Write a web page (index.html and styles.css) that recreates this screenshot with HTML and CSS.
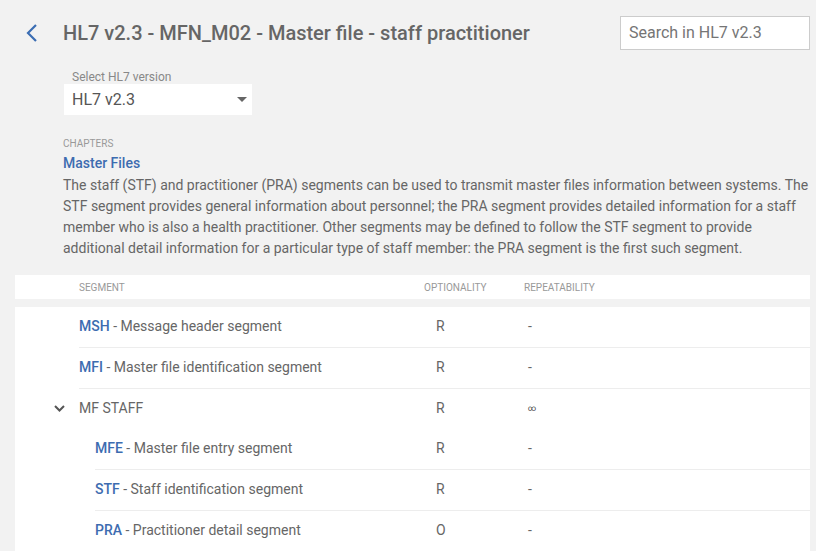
FILE: index.html
```html
<!DOCTYPE html>
<html>
<head>
<meta charset="utf-8">
<link rel="stylesheet" href="styles.css">
</head>
<body>
<header class="topbar">
  <a class="back" href="#"><svg width="14" height="20" viewBox="0 0 14 20"><path d="M11 2 L3 10 L11 18" fill="none" stroke="#3b6db3" stroke-width="2.2"/></svg></a>
  <h1 class="title">HL7 v2.3 - MFN_M02 - Master file - staff practitioner</h1>
  <div class="search">Search in HL7 v2.3</div>
</header>

<section class="version">
  <div class="version-label">Select HL7 version</div>
  <div class="select"><span>HL7 v2.3</span><svg width="10" height="5" viewBox="0 0 10 5"><path d="M0 0 H10 L5 5 Z" fill="#666"/></svg></div>
</section>

<section class="chapter">
  <div class="chapter-label">CHAPTERS</div>
  <div class="chapter-name">Master Files</div>
  <p class="chapter-desc">The staff (STF) and practitioner (PRA) segments can be used to transmit master files information between systems. The STF segment provides general information about personnel; the PRA segment provides detailed information for a staff member who is also a health practitioner. Other segments may be defined to follow the STF segment to provide additional detail information for a particular type of staff member: the PRA segment is the first such segment.</p>
</section>

<div class="thead">
  <div class="row head">
    <div>SEGMENT</div>
    <div>OPTIONALITY</div>
    <div>REPEATABILITY</div>
  </div>
</div>

<div class="tbody">
  <div class="row line">
    <div class="name"><b>MSH</b> - Message header segment</div>
    <div class="opt">R</div>
    <div class="rep">-</div>
  </div>
  <div class="row line">
    <div class="name"><b>MFI</b> - Master file identification segment</div>
    <div class="opt">R</div>
    <div class="rep">-</div>
  </div>
  <div class="row">
    <div class="name group"><svg class="toggle" width="11" height="7" viewBox="0 0 11 7"><path d="M1 1 L5.5 5.5 L10 1" fill="none" stroke="#555" stroke-width="2"/></svg>MF STAFF</div>
    <div class="opt">R</div>
    <div class="rep inf">∞</div>
  </div>
  <div class="row nested line">
    <div class="name"><b>MFE</b> - Master file entry segment</div>
    <div class="opt">R</div>
    <div class="rep">-</div>
  </div>
  <div class="row nested line">
    <div class="name"><b>STF</b> - Staff identification segment</div>
    <div class="opt">R</div>
    <div class="rep">-</div>
  </div>
  <div class="row nested">
    <div class="name"><b>PRA</b> - Practitioner detail segment</div>
    <div class="opt">O</div>
    <div class="rep">-</div>
  </div>
</div>
</body>
</html>
```

FILE: styles.css
```css
html, body {
  margin: 0;
  padding: 0;
  background: #f2f2f2;
  font-family: Roboto, "Liberation Sans", sans-serif;
  color: #666;
  overflow: hidden;
}

.topbar {
  display: flex;
  align-items: center;
  padding: 16px 6px 0 25px;
  height: 33px;
}

.back {
  display: flex;
  width: 14px;
  height: 20px;
  margin-right: 24px;
}

.title {
  flex: 1;
  margin: 0;
  font-size: 20px;
  font-weight: 500;
  color: #666;
  white-space: nowrap;
}

.search {
  box-sizing: border-box;
  width: 190px;
  height: 34px;
  background: #fff;
  border: 1px solid #ccc;
  padding: 0 8px;
  line-height: 32px;
  font-size: 16px;
  color: #757575;
}

.version {
  margin: 21px 0 0 64px;
}

.version-label {
  font-size: 12px;
  line-height: 14px;
  color: #888;
  padding-left: 8px;
}

.select {
  box-sizing: border-box;
  width: 188px;
  height: 31px;
  background: #fff;
  display: flex;
  align-items: center;
  justify-content: space-between;
  padding: 0 5px 0 8px;
  font-size: 16px;
  color: #555;
}

.chapter {
  margin: 23px 6px 0 63px;
}

.chapter-label {
  font-size: 10px;
  line-height: 12px;
  color: #999;
}

.chapter-name {
  font-size: 14px;
  font-weight: 500;
  line-height: 20px;
  margin-top: 3px;
  color: #3d6cb0;
}

.chapter-desc {
  margin: 2px 0 0;
  font-size: 14px;
  line-height: 21px;
  color: #666;
}

.thead {
  margin: 16px 6px 0 15px;
  background: #fff;
}

.tbody {
  margin: 8px 6px 0 15px;
  background: #fff;
}

.row {
  display: grid;
  grid-template-columns: 345px 100px 1fr;
  margin-left: 64px;
  height: 40px;
  align-items: center;
  font-size: 14px;
}

.tbody .row > div {
  margin-bottom: 2px;
}

.row.head {
  height: 24px;
  font-size: 10px;
  color: #999;
}

.row.nested {
  margin-left: 80px;
  grid-template-columns: 329px 100px 1fr;
}

.row.line {
  border-bottom: 1px solid #ededed;
}

.name b {
  font-weight: 500;
  color: #3d6cb0;
}

.name.group {
  display: flex;
  align-items: center;
  margin-left: -25px;
}

.toggle {
  margin-right: 14px;
}

.opt {
  padding-left: 12px;
}

.rep {
  padding-left: 4px;
}

.rep.inf {
  font-size: 8px;
  color: #444;
}
```
